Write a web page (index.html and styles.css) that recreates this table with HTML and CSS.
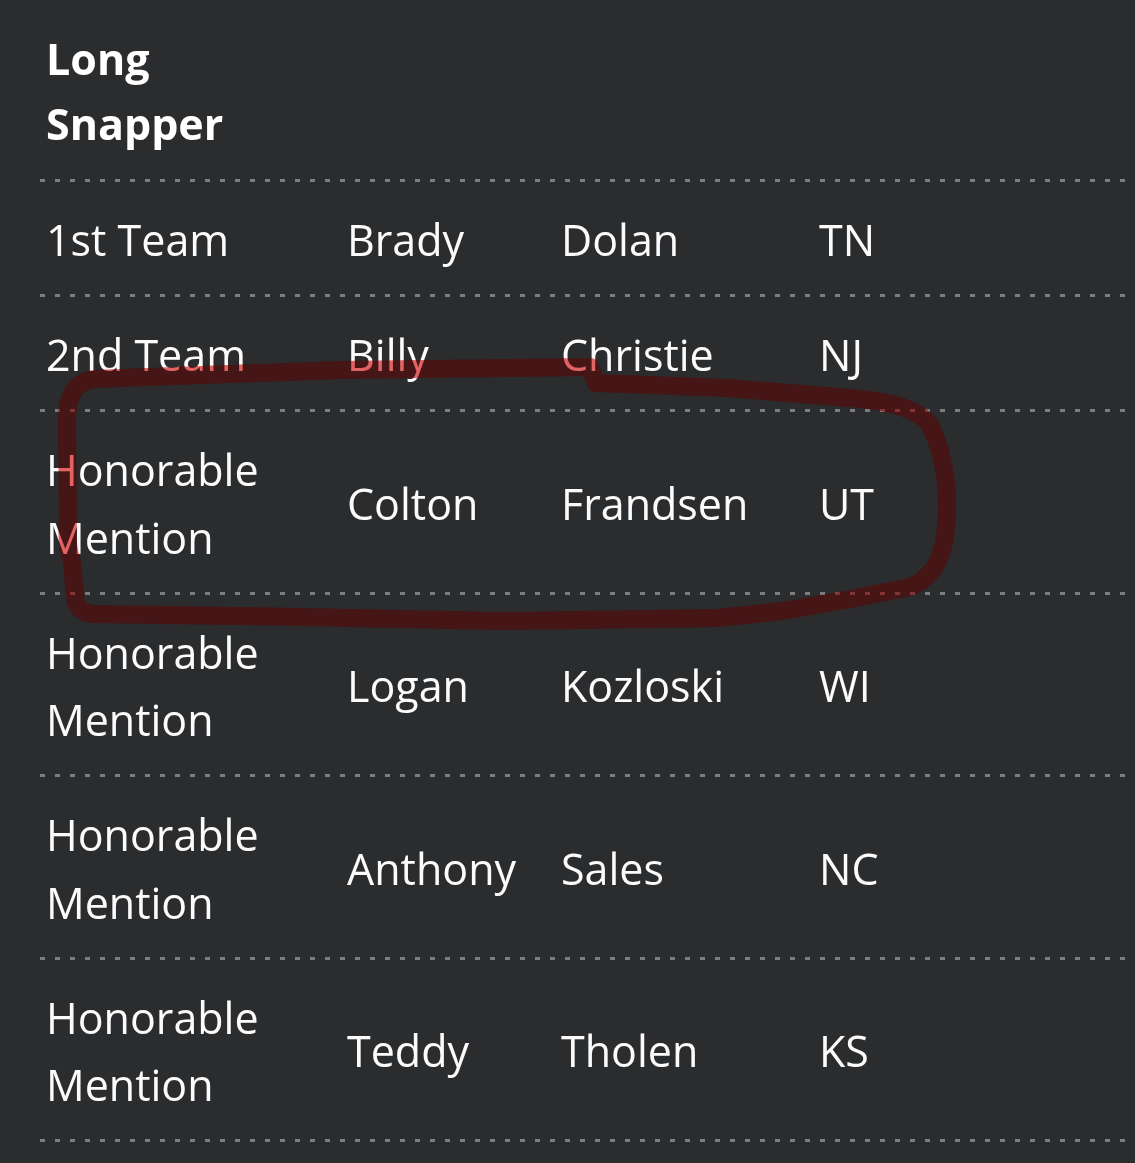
FILE: index.html
```html
<!DOCTYPE html>
<html lang="en">
<head>
    <meta charset="UTF-8">
    <meta name="viewport" content="width=device-width, initial-scale=1.0">
    <title>Long Snapper - All-American Team</title>
    <link rel="stylesheet" href="styles.css">
</head>
<body>
    <main class="page">
        <section class="awards">
            <div class="row head-row">
                <h2 class="cell position">Long Snapper</h2>
            </div>

            <div class="row">
                <div class="cell">1st Team</div>
                <div class="cell">Brady</div>
                <div class="cell">Dolan</div>
                <div class="cell">TN</div>
            </div>
            <div class="row">
                <div class="cell">2nd Team</div>
                <div class="cell">Billy</div>
                <div class="cell">Christie</div>
                <div class="cell">NJ</div>
            </div>
            <div class="row">
                <div class="cell">Honorable Mention</div>
                <div class="cell">Colton</div>
                <div class="cell">Frandsen</div>
                <div class="cell">UT</div>
            </div>
            <div class="row">
                <div class="cell">Honorable Mention</div>
                <div class="cell">Logan</div>
                <div class="cell">Kozloski</div>
                <div class="cell">WI</div>
            </div>
            <div class="row">
                <div class="cell">Honorable Mention</div>
                <div class="cell">Anthony</div>
                <div class="cell">Sales</div>
                <div class="cell">NC</div>
            </div>
            <div class="row">
                <div class="cell">Honorable Mention</div>
                <div class="cell">Teddy</div>
                <div class="cell">Tholen</div>
                <div class="cell">KS</div>
            </div>
        </section>

        <!-- red marker circled round the Frandsen row: a multiply layer tints the text, a thin wash tints the background -->
        <svg class="scribble tint" viewBox="0 0 1135 1163" width="1135" height="1163" aria-hidden="true">
            <path d="M 905 588 L 850 599 L 783 611 L 717 618 L 500 621 L 300 617 L 92 614
                     Q 76 612 75 596 L 72 562 Q 66 546 68 520 L 67 420
                     Q 67 382 95 379 L 340 370 L 590 367 L 596 383 L 727 388 L 850 398
                     Q 915 403 930 425 Q 947 460 947 505 Q 947 545 936 565 Q 923 585 905 588 Z"/>
        </svg>
        <svg class="scribble wash" viewBox="0 0 1135 1163" width="1135" height="1163" aria-hidden="true">
            <path d="M 905 588 L 850 599 L 783 611 L 717 618 L 500 621 L 300 617 L 92 614
                     Q 76 612 75 596 L 72 562 Q 66 546 68 520 L 67 420
                     Q 67 382 95 379 L 340 370 L 590 367 L 596 383 L 727 388 L 850 398
                     Q 915 403 930 425 Q 947 460 947 505 Q 947 545 936 565 Q 923 585 905 588 Z"/>
        </svg>
    </main>
</body>
</html>
```

FILE: styles.css
```css
body {
    margin: 0;
    padding: 0;
    background: #2b2c2e;
    color: #fbfbfb;
    font-family: "Open Sans", "Noto Sans", Arial, sans-serif;
}
.page {
    position: relative;
    width: 1135px;
    min-height: 1163px;
    background: #2b2c2e;
}
.awards {
    margin-left: 40px;
    width: 1085px;
}
.row {
    display: grid;
    grid-template-columns: 301px 214px 258px 1fr;
    align-items: center;
    padding: 24px 0 23.5px;
    font-size: 43px;
    line-height: 67.5px;
    background-image: repeating-linear-gradient(to right, #7c7d7e 0 5px, transparent 5px 15px);
    background-size: 100% 3px;
    background-position: left bottom;
    background-repeat: no-repeat;
}
.cell {
    padding: 0 6px;
}
.head-row {
    padding: 26px 0 26px;
}
.position {
    margin: 0;
    font-size: 43px;
    line-height: 65px;
    font-weight: 700;
    color: #ffffff;
}
.scribble {
    position: absolute;
    top: 0;
    left: 0;
    pointer-events: none;
}
.scribble path {
    fill: none;
    stroke-width: 18;
    stroke-linejoin: round;
    stroke-linecap: round;
}
.tint {
    mix-blend-mode: multiply;
}
.tint path {
    stroke: rgb(255, 126, 126);
}
.wash path {
    stroke: rgb(150, 23, 23);
    stroke-opacity: 0.25;
}
```
